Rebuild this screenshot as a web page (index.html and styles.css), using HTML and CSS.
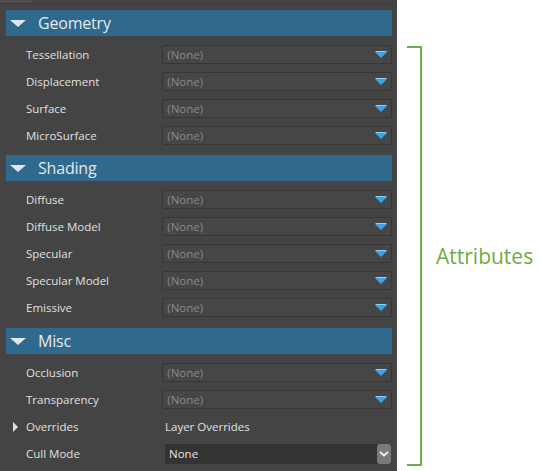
FILE: index.html
```html
<!DOCTYPE html>
<html>
<head>
<meta charset="utf-8">
<link rel="stylesheet" href="styles.css">
</head>
<body>
<div class="page">
  <div class="panel">
    <div class="topbar"><span class="tab"></span></div>

    <div class="section first">
      <div class="header"><span class="tri-down"></span><span class="htitle">Geometry</span></div>
      <div class="rows">
        <div class="row"><span class="label">Tessellation</span><div class="dd"><span>(None)</span><span class="arrow"></span></div></div>
        <div class="row"><span class="label">Displacement</span><div class="dd"><span>(None)</span><span class="arrow"></span></div></div>
        <div class="row"><span class="label">Surface</span><div class="dd"><span>(None)</span><span class="arrow"></span></div></div>
        <div class="row"><span class="label">MicroSurface</span><div class="dd"><span>(None)</span><span class="arrow"></span></div></div>
      </div>
    </div>

    <div class="section">
      <div class="header"><span class="tri-down"></span><span class="htitle">Shading</span></div>
      <div class="rows">
        <div class="row"><span class="label">Diffuse</span><div class="dd"><span>(None)</span><span class="arrow"></span></div></div>
        <div class="row"><span class="label">Diffuse Model</span><div class="dd"><span>(None)</span><span class="arrow"></span></div></div>
        <div class="row"><span class="label">Specular</span><div class="dd"><span>(None)</span><span class="arrow"></span></div></div>
        <div class="row"><span class="label">Specular Model</span><div class="dd"><span>(None)</span><span class="arrow"></span></div></div>
        <div class="row"><span class="label">Emissive</span><div class="dd"><span>(None)</span><span class="arrow"></span></div></div>
      </div>
    </div>

    <div class="section">
      <div class="header"><span class="tri-down"></span><span class="htitle">Misc</span></div>
      <div class="rows">
        <div class="row"><span class="label">Occlusion</span><div class="dd"><span>(None)</span><span class="arrow"></span></div></div>
        <div class="row"><span class="label">Transparency</span><div class="dd"><span>(None)</span><span class="arrow"></span></div></div>
        <div class="row"><span class="label with-tri"><span class="tri-right"></span>Overrides</span><span class="value">Layer Overrides</span></div>
        <div class="row"><span class="label">Cull Mode</span><div class="combo"><span>None</span><span class="cbtn"><svg width="10" height="6" viewBox="0 0 10 6"><path d="M1 1 L5 4.5 L9 1" fill="none" stroke="#f2f2f2" stroke-width="1.8"/></svg></span></div></div>
      </div>
    </div>
  </div>

  <div class="annot">
    <div class="bracket"></div>
    <div class="atext">Attributes</div>
  </div>
</div>
</body>
</html>
```

FILE: styles.css
```css
html, body {
  margin: 0;
  padding: 0;
  background: #ffffff;
}
body {
  font-family: "Open Sans", "Noto Sans", sans-serif;
}
.page {
  display: flex;
  width: 540px;
  height: 471px;
}
.panel {
  width: 397px;
  height: 471px;
  background: #444444;
  box-sizing: border-box;
}
.topbar {
  height: 3px;
  border-bottom: 1px solid #3b3b3b;
  margin-bottom: 6px;
}
.tab {
  display: block;
  width: 32px;
  height: 3px;
  background: #4d4d4d;
}
.section {
  margin-left: 6px;
  width: 386px;
}
.header {
  height: 26px;
  background: #2f6a8e;
  display: flex;
  align-items: center;
}
.tri-down {
  width: 0;
  height: 0;
  margin-left: 4px;
  border-left: 8px solid transparent;
  border-right: 8px solid transparent;
  border-top: 7px solid #e2e6ea;
}
.htitle {
  margin-left: 12px;
  color: #e4e8ec;
  font-size: 16px;
  letter-spacing: -0.2px;
  line-height: 26px;
}
.rows {
  padding: 5px 0 7px 0;
}
.first .rows {
  padding-bottom: 6px;
}
.row {
  height: 27px;
  display: flex;
  align-items: center;
}
.label {
  width: 157px;
  padding-left: 20px;
  box-sizing: border-box;
  color: #e0e0e0;
  font-size: 11.5px;
  position: relative;
}
.with-tri .tri-right {
  position: absolute;
  left: 7px;
  top: 50%;
  margin-top: -5px;
  width: 0;
  height: 0;
  border-top: 5px solid transparent;
  border-bottom: 5px solid transparent;
  border-left: 5px solid #dddddd;
}
.dd {
  width: 231px;
  height: 19px;
  box-sizing: border-box;
  border: 1px solid #363636;
  border-radius: 2px;
  background: #464646;
  display: flex;
  align-items: center;
  justify-content: space-between;
  padding: 0 4px 0 4px;
  color: #8a8a8a;
  font-size: 11.5px;
}
.arrow {
  width: 0;
  height: 0;
  border-left: 6px solid transparent;
  border-right: 6px solid transparent;
  border-top: 6px solid #3aa3ea;
  filter: drop-shadow(0 -1px 0 #8fd0ff);
}
.value {
  margin-left: 2px;
  color: #e0e0e0;
  font-size: 11.5px;
}
.combo {
  margin-left: 2px;
  width: 226px;
  height: 20px;
  box-sizing: border-box;
  background: #333333;
  display: flex;
  align-items: center;
  justify-content: space-between;
  padding-left: 4px;
  color: #e6e6e6;
  font-size: 11.5px;
}
.cbtn {
  width: 14px;
  height: 20px;
  border-radius: 3px;
  background: #7a7a7a;
  display: flex;
  align-items: center;
  justify-content: center;
}
.annot {
  display: flex;
  align-items: center;
  padding-top: 44px;
  height: 423px;
}
.bracket {
  margin-left: 10px;
  width: 13px;
  height: 416px;
  border-top: 2px solid #70ad47;
  border-right: 2px solid #70ad47;
  border-bottom: 2px solid #70ad47;
}
.atext {
  margin-left: 14px;
  color: #6fac46;
  font-size: 21px;
  font-family: "Open Sans", "Noto Sans", sans-serif;
}
```
